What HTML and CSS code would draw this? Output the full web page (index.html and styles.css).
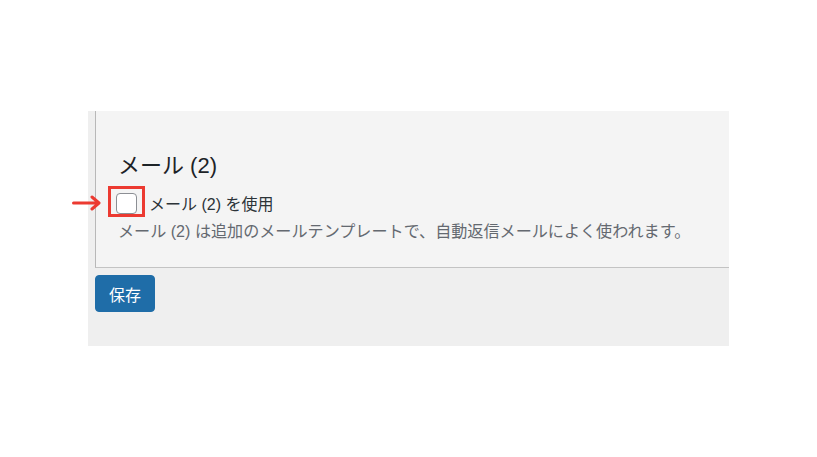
FILE: index.html
```html
<!DOCTYPE html>
<html lang="ja">
<head>
<meta charset="utf-8">
<link rel="stylesheet" href="styles.css">
</head>
<body>
<div class="stage">
  <div class="wrap">
    <div class="card">
      <h2 class="title">メール (2)</h2>
      <label class="row">
        <span class="box"></span>
        <span class="label-text">メール (2) を使用</span>
        <span class="highlight"></span>
        <svg class="arrow" width="30" height="16" viewBox="0 0 30 16"><path d="M1.5 8 H26 M20 2 L27 8 L20 14" fill="none" stroke="#ec3a31" stroke-width="3" stroke-linecap="round" stroke-linejoin="round"/></svg>
      </label>
      <p class="desc">メール (2) は追加のメールテンプレートで、自動返信メールによく使われます。</p>
    </div>
    <div class="actions">
      <button class="save">保存</button>
    </div>
  </div>
</div>
</body>
</html>
```
FILE: styles.css
```css
html, body {
  margin: 0;
  padding: 0;
  background: #ffffff;
}
body {
  font-family: "Liberation Sans", "Noto Sans CJK JP", sans-serif;
  color: #1d2327;
}
.stage {
  padding: 111px 0 0 88px;
}
.wrap {
  width: 641px;
  height: 235px;
  background: #efefef;
  display: flex;
  flex-direction: column;
}
.card {
  margin-left: 7px;
  background: #f4f4f4;
  border-left: 1px solid #b8b8b8;
  border-bottom: 1px solid #c3c3c3;
  padding: 41px 0 0 22px;
  box-sizing: border-box;
  height: 157px;
}
.title {
  margin: 0;
  font-size: 22px;
  font-weight: 400;
  line-height: 28px;
  color: #1d2327;
}
.row {
  position: relative;
  display: flex;
  align-items: center;
  margin-top: 11px;
  height: 24px;
  font-size: 16px;
  color: #2c3338;
}
.box {
  width: 19px;
  height: 19px;
  margin-left: -2px;
  margin-right: 12px;
  border: 1px solid #8c8f94;
  border-radius: 4px;
  background: #ffffff;
}
.highlight {
  position: absolute;
  left: -10px;
  top: -5px;
  width: 31px;
  height: 25px;
  border: 3px solid #ec3a31;
}
.arrow {
  position: absolute;
  left: -46px;
  top: 4px;
}
.desc {
  margin: 5px 0 0 0;
  font-size: 16.1px;
  line-height: 22px;
  color: #646970;
}
.actions {
  padding: 7px 0 0 7px;
}
.save {
  width: 60px;
  height: 37px;
  background: #1f6da8;
  border: 1px solid #1f6da8;
  border-radius: 4px;
  color: #ffffff;
  font-family: "Liberation Sans", "Noto Sans CJK JP", sans-serif;
  font-size: 16px;
  padding: 0;
}
```
